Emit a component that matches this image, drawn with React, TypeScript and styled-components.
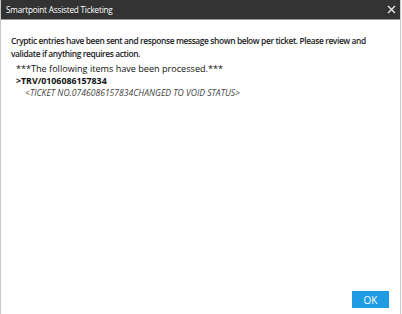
import React from 'react';
import styled, { createGlobalStyle } from 'styled-components';

const GlobalStyle = createGlobalStyle`
  html, body {
    margin: 0;
    padding: 0;
    background: #ffffff;
  }
  body {
    font-family: "Open Sans", "Liberation Sans", sans-serif;
  }
`;

const Window = styled.div`
  width: 401px;
  height: 314px;
  box-sizing: border-box;
  border-left: 1px solid #c8c8c8;
  border-right: 1px solid #c8c8c8;
  display: flex;
  flex-direction: column;
  background: #fff;
`;

const TitleBar = styled.div`
  height: 19px;
  background: #333333;
  border-bottom: 1px solid #9a9a9a;
  display: flex;
  align-items: center;
  justify-content: space-between;
  padding: 0 4px 0 5px;
  color: #ffffff;
  font-size: 8.2px;
  letter-spacing: -0.2px;
`;

const CloseButton = styled.span`
  display: flex;
  align-items: center;
  color: #e8e8e8;
`;

const Body = styled.div`
  flex: 1;
  display: flex;
  flex-direction: column;
  padding: 14px 10px 0 10px;
  color: #1a1a1a;
`;

const Intro = styled.p`
  margin: 0;
  font-size: 8.4px;
  font-weight: 600;
  letter-spacing: -0.38px;
  line-height: 13px;
`;

const Output = styled.div`
  margin-top: 3px;
  padding-left: 5px;
  line-height: 12px;
`;

const Line = styled.div<{ $bold?: boolean; $italic?: boolean; $indent?: number; $size?: number }>`
  font-size: ${(p) => p.$size || 9.1}px;
  font-weight: ${(p) => (p.$bold ? 700 : 400)};
  font-style: ${(p) => (p.$italic ? 'italic' : 'normal')};
  padding-left: ${(p) => p.$indent || 0}px;
  color: ${(p) => (p.$italic ? '#444' : '#111')};
`;

const Footer = styled.div`
  display: flex;
  justify-content: flex-end;
  padding: 0 11px 6px 0;
`;

const OkButton = styled.button`
  width: 37px;
  height: 17px;
  border: none;
  background: #1e9be2;
  color: #fff;
  font-family: "Open Sans", "Liberation Sans", sans-serif;
  font-size: 10px;
  padding: 0;
  cursor: pointer;
`;

const App: React.FC = () => {
  return (
    <>
      <GlobalStyle />
      <Window>
        <TitleBar>
          <span>Smartpoint Assisted Ticketing</span>
          <CloseButton>
            <svg width="9" height="9" viewBox="0 0 9 9">
              <path d="M1 1 L8 8 M8 1 L1 8" stroke="currentColor" strokeWidth="1.4" />
            </svg>
          </CloseButton>
        </TitleBar>
        <Body>
          <Intro>
            Cryptic entries have been sent and response message shown below per ticket. Please review and
            validate if anything requires action.
          </Intro>
          <Output>
            <Line>***The following items have been processed.***</Line>
            <Line $bold $size={8.8}>&gt;TRV/0106086157834</Line>
            <Line $italic $indent={9} $size={8.6}>&lt;TICKET NO.0746086157834CHANGED TO VOID STATUS&gt;</Line>
          </Output>
        </Body>
        <Footer>
          <OkButton>OK</OkButton>
        </Footer>
      </Window>
    </>
  );
};

export default App;
